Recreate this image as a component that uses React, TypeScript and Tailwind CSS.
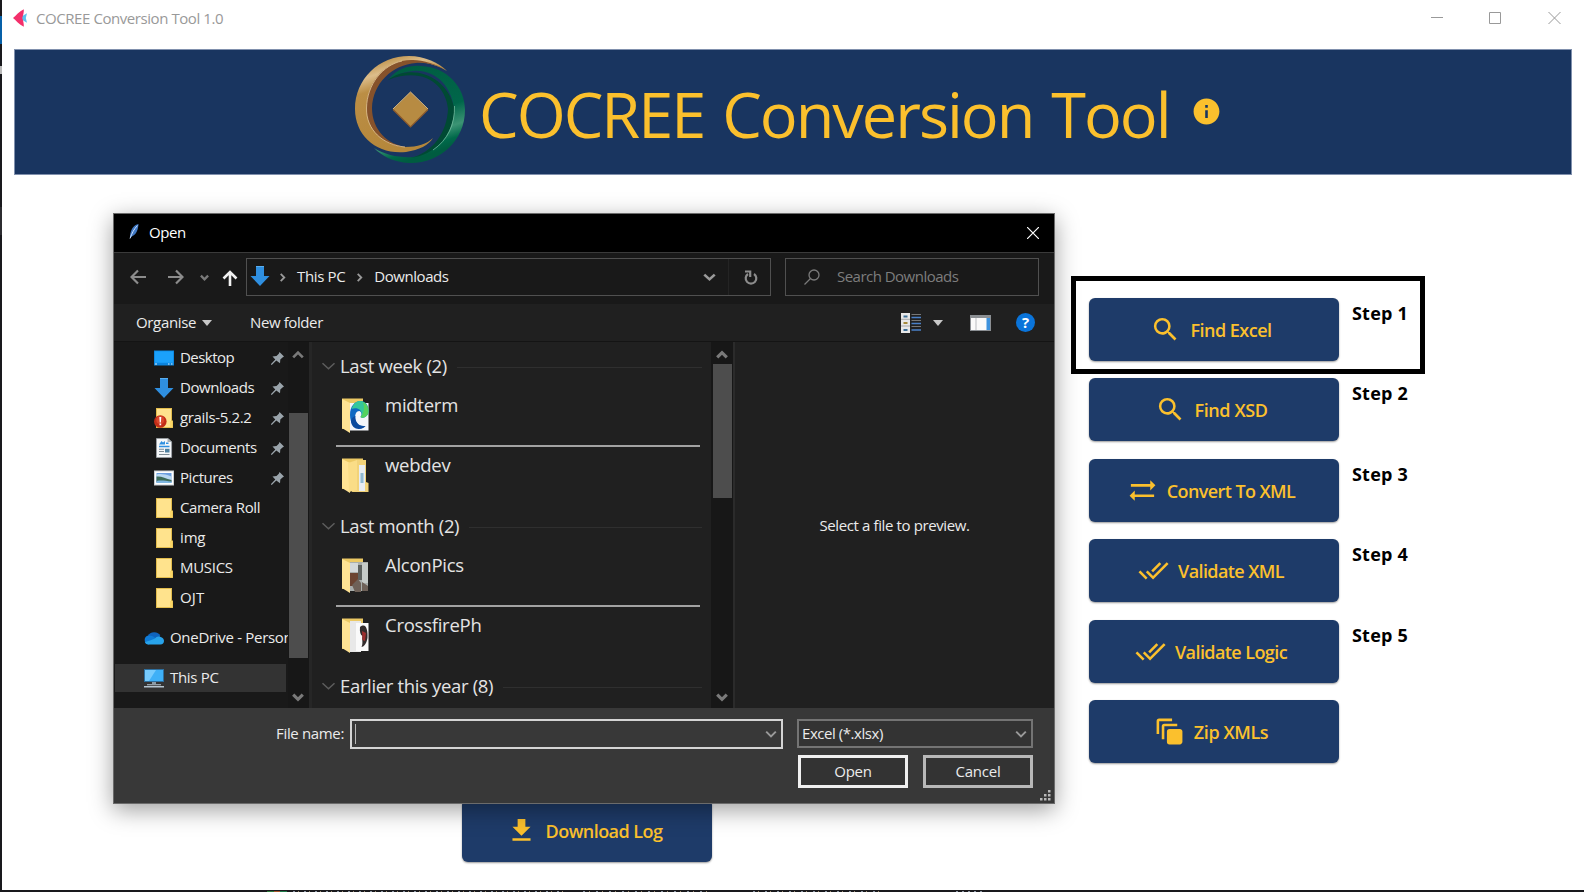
import React from "react";
import {
  MdSearch,
  MdSyncAlt,
  MdDoneAll,
  MdAutoAwesomeMotion,
  MdFileDownload,
  MdInfo,
} from "react-icons/md";

type IconType = React.ComponentType<{ className?: string }>;

function AppMark() {
  return (
    <svg className="h-[18px] w-[15px]" viewBox="0 0 15 18">
      <path d="M6 9 14 4.200 12.800 9 14 13.800z" fill="#5cc2ee" />
      <path d="M0 9C3 6.500 6 2.500 10.800 0.200C11 3 10.200 6.500 9.200 9C10.200 11.500 11 15 10.800 17.800C6 15.500 3 11.500 0 9z" fill="#f3306b" />
    </svg>
  );
}

function Emblem() {
  return (
    <svg className="h-[108px] w-[111px] shrink-0" viewBox="0 0 111 108">
      <defs>
        <linearGradient id="gold" x1="0" y1="0" x2="0.3" y2="1">
          <stop offset="0" stopColor="#b98a43" />
          <stop offset="0.12" stopColor="#c0954f" />
          <stop offset="0.24" stopColor="#dcbd8b" />
          <stop offset="0.38" stopColor="#bb8e45" />
          <stop offset="1" stopColor="#b5873b" />
        </linearGradient>
        <linearGradient id="green" x1="0" y1="0" x2="0.3" y2="1">
          <stop offset="0" stopColor="#005c40" />
          <stop offset="0.6" stopColor="#00664a" />
          <stop offset="0.8" stopColor="#3c9474" />
          <stop offset="0.92" stopColor="#00694a" />
          <stop offset="1" stopColor="#005c40" />
        </linearGradient>
      </defs>
      <path d="M33 24C43 11 57 9 66 10C92 11 110 31 110 54C110 85 84 108 54 107C38 106 27 100 19 92C30 99 45 102 58 101C80 98 97 80 99 54C97 30 80 13 58 15C47 16 38 20 33 24z" fill="url(#green)" />
      <path d="M33 24C52 8 92 16 99.500 53C98 80 80 99 55 102C78 97 92 76 93 53C91 30 70 10 33 24z" fill="#004a33" />
      <path d="M99.500 50C100 68 93 84 78 94" fill="none" stroke="#7fc4a8" strokeWidth="0.700" />
      <path d="M92 15C84 7 70 0 54 0C24 0 0 23 0 53C0 80 22 99 51 96C64 94 74 89 78 82C72 88 62 91 51 91C29 90 16 74 16 53C17 27 37 6 61 6C73 6 84 10 92 15z" fill="url(#gold)" />
      <path d="M92 15C82 8 68 4 58 4C32 3 12 24 11.500 52C11 74 30 92 54 91C32 90 17 73 17 52C18 27 37 9 61 7C73 6 84 10 92 15z" fill="#86522b" />
      <path d="M50 91C28 89 11 74 11.500 52C12 28 28 9 47 5" fill="none" stroke="#e2c595" strokeWidth="0.800" />
      <path d="M55.500 36 73 53.500 55.500 71 38 53.500z" fill="#b78b42" />
      <path d="M38 53.500 55.500 71 73 53.500" fill="none" stroke="#8b5a2d" strokeWidth="1.200" />
      <path d="M38 53 55.500 36 73 53" fill="none" stroke="#dcba80" strokeWidth="1" />
    </svg>
  );
}

function Chevron({ className, w = 2 }: { className: string; w?: number }) {
  return (
    <svg className={className} viewBox="0 0 10 10" preserveAspectRatio="none" fill="none" stroke="currentColor" strokeWidth={w}>
      <path d="M1 3l4 4 4-4" />
    </svg>
  );
}

function BlueArrow() {
  return (
    <svg className="h-5 w-5 shrink-0" viewBox="0 0 20 20">
      <path d="M6 0h8v10h5.500L10 20 0.500 10H6z" fill="#2f8fe0" />
      <path d="M6 0h8v1H6z" fill="#59aef0" />
    </svg>
  );
}

function FolderSmall({ alert }: { alert?: boolean }) {
  return (
    <svg className="h-5 w-5 shrink-0" viewBox="0 0 20 20">
      <path d="M2 0h16v12l1 1v7H2z" fill="#e3bd4d" />
      <path d="M3 1h14v18H3z" fill="#ffe38d" />
      <path d="M16 13h2.500v6.300H16z" fill="#fbd768" />
      {alert && (
        <>
          <circle cx="6.300" cy="13.500" r="6.300" fill="#c22c17" />
          <circle cx="6.300" cy="12" r="4" fill="#d9462c" />
          <path d="M5.300 9h2l-.4 5.500H5.700zM5.500 15.500h1.700v1.700H5.500z" fill="#fff" />
        </>
      )}
    </svg>
  );
}

function DesktopIcon() {
  return (
    <svg className="h-5 w-5 shrink-0" viewBox="0 0 20 20">
      <path d="M0 2.500h20v15H0z" fill="#0b84dd" />
      <path d="M0.800 3.300h18.400v11.500H0.800z" fill="#1ba1fb" />
      <path d="M1 15.500h2v1H1zM14 15.500h1.500v1H14zM17 15.500h1.500v1H17z" fill="#d8efff" />
    </svg>
  );
}

function DocumentIcon() {
  return (
    <svg className="h-5 w-5 shrink-0" viewBox="0 0 20 20">
      <path d="M2.500 0.400H14L17.600 4v15.600H2.500z" fill="#f4f6f8" stroke="#9da3a8" strokeWidth="0.800" />
      <path d="M13.500 0v4H18z" fill="#a9b0b5" />
      <path d="M5 6.500 7.500 3l1.500 1.500L11 3v3.500zM5 7.800h10.500v1.400H5zM12 4.500h2.500V6H12z" fill="#2f8fe0" />
      <path d="M5 10.800h5v1H5zM5 13h5v1H5zM5 16h10.500v1H5z" fill="#7c8a94" />
      <path d="M11 10.800h4.500v3.700H11z" fill="#4c7f9f" />
    </svg>
  );
}

function PictureIcon() {
  return (
    <svg className="h-5 w-5 shrink-0" viewBox="0 0 20 20">
      <path d="M0 2.500h20v15H0z" fill="#c9ced2" />
      <path d="M1 3.500h18v13H1z" fill="#fff" />
      <path d="M2.500 5h15v10h-15z" fill="#6c9fe0" />
      <path d="M2.500 6.500c4-1 8-.5 15 2V12h-15z" fill="#b9d8f2" />
      <path d="M2.500 8.500c5-.5 9 2 15 3.500V14h-15z" fill="#3d6b58" />
      <path d="M2.500 13c5-1 9 0 15 .5V15h-15z" fill="#7fb6e0" />
    </svg>
  );
}

function CloudIcon() {
  return (
    <svg className="h-5 w-5 shrink-0" viewBox="0 0 20 20">
      <path d="M4 8a6.500 5.500 0 0 1 12.300 0l-4.300 5H3z" fill="#0f63bd" />
      <path d="M4.500 16.500A4.500 4.500 0 0 1 4.500 7.600C8 7.500 10 9 14 12z" fill="#0f7bd6" />
      <path d="M4.500 16.500c-1.500 0-3-1-3.500-2.300 3-1.200 7-2.200 10-3.700 1-1.500 3-2.500 5-1.800 3 .5 4 2.500 4 4.300a3.700 3.700 0 0 1-3.500 3.500z" fill="#28a3ea" />
    </svg>
  );
}

function ComputerIcon() {
  return (
    <svg className="h-5 w-5 shrink-0" viewBox="0 0 20 20">
      <path d="M0 1h20v13H0z" fill="#2d6f9f" />
      <path d="M1 2h18v11H1z" fill="#3fb0f7" />
      <path d="M1 2h11L5 13H1z" fill="#77cbfd" />
      <path d="M8 14h4v2H8z" fill="#8a9aa5" />
      <path d="M3 16.300h14v1H3zM0 18h20v1.500H0z" fill="#b5c4cf" />
    </svg>
  );
}

function Pin() {
  return (
    <svg className="h-[13px] w-[13px] shrink-0" viewBox="0 0 13 13">
      <path d="M8.500 0 13 4.500 11.500 5.500 9.300 7.500 9 11.300 5.300 8.500 1 12.800H0V12L4.300 7.600 1.500 4.500 5.500 4 7.800 1.700z" fill="#9aa4ab" />
    </svg>
  );
}

type FolderKind = "edge" | "files" | "photo" | "game";

function BigFolder({ kind }: { kind: FolderKind }) {
  return (
    <svg className="h-[35px] w-[27px] shrink-0" viewBox="0 0 27 35">
      <path d="M0 0.500h21V31H0z" fill="#ecc964" />
      {kind === "edge" && (
        <>
          <path d="M7 5h19.500v27.500H7z" fill="#f4f6fa" />
          <path d="M8 17C8 8 13 3 18.500 3S27 8 26.500 14c-.5 4-5 7-8 5 2-2 1-5-1-6-4 0-5 5-4 9 1 4 5 7 10 6-6 6-15.500 1-15.500-11z" fill="#0d68c2" />
          <path d="M9.500 11C12 4.500 15 3 18.500 3c5 0 8.500 5 8 11-.5 4-5 7-8 5 2-2 1.500-5-.5-7-2-2-5.500-2.500-8.500-1z" fill="#35c79c" />
          <path d="M21 4c4 2 6 6 5.500 10-.5 4-5 7-8 5 3-3 4.500-9 2.500-15z" fill="#55d25f" />
          <path d="M13.500 18c-1 5 3 11 10 10-3 3.500-9 4-12 1-4-5-3-9 2-11z" fill="#0c4a9e" />
        </>
      )}
      {kind === "files" && (
        <>
          <path d="M14 2h10v22l2.500 1v9H10z" fill="#f2d379" />
          <path d="M17 7h6v26h-6z" fill="#e8edf2" />
          <path d="M18.500 15h3v10h-3z" fill="#8fb9d2" />
        </>
      )}
      {kind === "photo" && (
        <>
          <path d="M8 4h18v29H8z" fill="#a9aeac" />
          <path d="M8 15h8v13H8z" fill="#6b4432" />
          <path d="M16 7h4v15h-4z" fill="#5d615f" />
          <path d="M20 5h6v20h-6z" fill="#c5cac8" />
          <path d="M8 5h8v9H8z" fill="#d3d8da" />
          <path d="M10 27l6-6 3 4v9h-6zM20 24l6 4v5h-6z" fill="#6e6158" />
        </>
      )}
      {kind === "game" && (
        <>
          <path d="M8 3h11v31H8z" fill="#e8e8e8" />
          <path d="M14 5h12.500v28H14z" fill="#fafafa" />
          <path d="M18 9c6-5 8 3 7.500 11-1 6-4 9-6 9 2-4 0-8 1-11-2-1-3-4-2.500-9z" fill="#332c2c" />
          <path d="M20 13l4 2-1 8-2.500-1z" fill="#9c2f2f" />
        </>
      )}
      <path d="M0 1 8 5v30L0 30z" fill="#ffe394" />
      {kind === "files" && <path d="M6 5l9-3v30l-8 2z" fill="#fadd87" />}
    </svg>
  );
}

const places: { name: string; icon: React.ReactNode; pinned?: boolean; cls: string }[] = [
  { name: "Desktop", icon: <DesktopIcon />, pinned: true, cls: "tracking-[-0.55px]" },
  { name: "Downloads", icon: <BlueArrow />, pinned: true, cls: "tracking-[-0.45px]" },
  { name: "grails-5.2.2", icon: <FolderSmall alert />, pinned: true, cls: "tracking-[-0.35px]" },
  { name: "Documents", icon: <DocumentIcon />, pinned: true, cls: "tracking-[-0.4px]" },
  { name: "Pictures", icon: <PictureIcon />, pinned: true, cls: "tracking-[-0.45px]" },
  { name: "Camera Roll", icon: <FolderSmall />, cls: "tracking-[-0.38px]" },
  { name: "img", icon: <FolderSmall />, cls: "tracking-[-0.15px]" },
  { name: "MUSICS", icon: <FolderSmall />, cls: "tracking-[-0.3px]" },
  { name: "OJT", icon: <FolderSmall />, cls: "tracking-[0.1px]" },
];

function GroupHeader({ label }: { label: string }) {
  return (
    <div className="flex h-6 items-center pr-[9px] pl-[9px]">
      <Chevron className="mr-1 h-[14px] w-[15px] text-[#5c5c5c]" w={1} />
      <span className="text-[18.500px] leading-6 tracking-[-0.34px] text-[#e4e4e4]">{label}</span>
      <span className="mt-[2px] ml-[10px] h-px flex-1 bg-[#2f2f2f]" />
    </div>
  );
}

function FileRow({ name, kind, line }: { name: string; kind: FolderKind; line?: boolean }) {
  return (
    <div className="mr-[11px] ml-6 flex h-[60px] flex-col">
      <div className="flex h-[59px] shrink-0 items-start">
        <div className="mt-[12px] ml-[6px]">
          <BigFolder kind={kind} />
        </div>
        <span className="mt-[7px] ml-4 text-[18.500px] leading-6 tracking-[-0.25px] text-[#e4e4e4]">{name}</span>
      </div>
      {line && <span className="h-[2px] shrink-0 bg-[#a2a2a2]" />}
    </div>
  );
}

function Dialog() {
  return (
    <div className="absolute top-[213px] left-[113px] flex h-[591px] w-[942px] flex-col border border-[#6b6b6b] bg-[#191919] text-[15px] text-[#ebebeb] shadow-[0_6px_22px_rgba(0,0,0,0.38)]">
      <div className="flex h-[38px] shrink-0 items-center bg-black pr-[15px] pl-[15px]">
        <svg className="mb-[4px] h-[15px] w-[10px]" viewBox="0 0 10 15">
          <path d="M9.500 0C5 1 1 5 1 14l2.500-2C7.500 10 9 6 9.500 0z" fill="#3f78c4" />
          <path d="M1 14.500C3 9 5 5 8.500 1.500" stroke="#cfe2ff" strokeWidth="1" fill="none" />
        </svg>
        <span className="mb-[2px] ml-[10px] flex-1 tracking-[-0.4px] text-white">Open</span>
        <svg className="h-3 w-3" viewBox="0 0 12 12" stroke="#fff" strokeWidth="1.200">
          <path d="M0 0l12 12M12 0L0 12" />
        </svg>
      </div>

      <div className="flex h-[52px] shrink-0 items-center border-t border-[#3a3a3a] pr-[15px] pb-[3px] pl-4">
        <svg className="h-4 w-4" viewBox="0 0 16 16" fill="none" stroke="#8c8c8c" strokeWidth="2.200">
          <path d="M16 8H1.500M8 1.500 1.500 8 8 14.500" />
        </svg>
        <svg className="ml-[22px] h-4 w-4" viewBox="0 0 16 16" fill="none" stroke="#8c8c8c" strokeWidth="2.200">
          <path d="M0 8h14.500M8 1.500 14.500 8 8 14.500" />
        </svg>
        <Chevron className="ml-[16px] h-[9px] w-[9px] text-[#7a7a7a]" w={2.6} />
        <svg className="mt-[2px] ml-[13px] h-4 w-4" viewBox="0 0 16 16" fill="none" stroke="#f2f2f2" strokeWidth="2.600">
          <path d="M8 16V2M1.500 8.500 8 2l6.500 6.500" />
        </svg>
        <div className="ml-[8px] flex h-[38px] w-[525px] items-center border border-[#505050] pl-[3px]">
          <span className="mb-[3px] flex"><BlueArrow /></span>
          <Chevron className="ml-[8px] h-[9px] w-[9px] -rotate-90 text-[#9a9a9a]" w={2} />
          <span className="mb-[2px] ml-[10px] tracking-[-0.35px]">This PC</span>
          <Chevron className="ml-[10px] h-[9px] w-[9px] -rotate-90 text-[#9a9a9a]" w={2} />
          <span className="mb-[2px] ml-[10px] flex-1 tracking-[-0.45px]">Downloads</span>
          <Chevron className="h-[12px] w-[13px] text-[#9a9a9a]" w={2} />
          <span className="ml-[12px] h-full w-px bg-[#242424]" />
          <svg className="mr-[12px] ml-[15px] h-[15px] w-[14px]" viewBox="0 0 14 15" fill="none" stroke="#8c8c8c" strokeWidth="2.200">
            <path d="M4 4A5.300 5.300 0 1 0 10 4M1 1.500h5.200V7" />
          </svg>
        </div>
        <div className="ml-[14px] flex h-[38px] flex-1 items-center border border-[#505050] pl-[18px]">
          <svg className="h-4 w-4" viewBox="0 0 16 16" fill="none" stroke="#7a7a7a" strokeWidth="1.300">
            <circle cx="10" cy="6" r="5" />
            <path d="M6.500 9.500.5 15.500" />
          </svg>
          <span className="mb-[2px] ml-[17px] tracking-[-0.52px] text-[#7d7d7d]">Search Downloads</span>
        </div>
      </div>

      <div className="flex h-[38px] shrink-0 items-center border-b border-[#141414] bg-[#202020] pr-[19px] pl-[22px]">
        <span className="tracking-[-0.35px]">Organise</span>
        <span className="ml-[6px] h-0 w-0 border-x-[5px] border-t-[6px] border-x-transparent border-t-[#c8c8c8]" />
        <span className="ml-[38px] flex-1 tracking-[-0.4px]">New folder</span>
        <svg className="h-5 w-5" viewBox="0 0 20 20">
          <path d="M0 0h9v20H0z" fill="#e8e8e8" />
          <path d="M0 6.300h9M0 13h9" stroke="#8d8d8d" strokeWidth="0.700" />
          <path d="M2.500 2.500h4v2h-4zM2.500 16h4v2h-4z" fill="#3c6f96" />
          <path d="M2.500 9h4v2h-4z" fill="#a58a3c" />
          <path d="M10.500 1.500H20M10.500 7.500H20M10.500 13.500H20" stroke="#777" strokeWidth="1" />
          <path d="M10.500 4.500H20M10.500 10.500H20M10.500 17H20" stroke="#4a80c8" strokeWidth="1.400" />
        </svg>
        <span className="ml-[12px] h-0 w-0 border-x-[5px] border-t-[6px] border-x-transparent border-t-[#c8c8c8]" />
        <svg className="ml-[27px] h-4 w-[21px]" viewBox="0 0 21 16">
          <path d="M0 0h21v16H0z" fill="#8b8f93" />
          <path d="M1 3h19v12H1z" fill="#fafafa" />
          <path d="M5.500 3h1v12h-1z" fill="#b9bcc0" />
          <path d="M16.500 3H20v12h-3.500z" fill="#3d92dd" />
        </svg>
        <span className="ml-[25px] flex h-[19px] w-[19px] items-center justify-center rounded-full bg-[#0a74da] text-[15px] leading-none font-bold text-white">?</span>
      </div>

      <div className="flex min-h-0 flex-1">
        <div className="flex w-[174px] shrink-0 flex-col overflow-hidden pt-px">
          {places.map((p) => (
            <div key={p.name} className="flex h-[30px] shrink-0 items-center pr-[1px] pl-10">
              {p.icon}
              <span className={"mb-px ml-[6px] flex-1 whitespace-nowrap " + p.cls}>{p.name}</span>
              {p.pinned && <span className="mr-[3px]"><Pin /></span>}
            </div>
          ))}
          <div className="mt-[10px] flex h-[30px] shrink-0 items-center pl-[30px]">
            <CloudIcon />
            <span className="mb-px ml-[6px] whitespace-nowrap tracking-[-0.3px]">OneDrive - Personal</span>
          </div>
          <div className="mt-[11px] mr-[2px] ml-px flex h-7 shrink-0 items-center bg-[#333333] pl-[29px]">
            <ComputerIcon />
            <span className="mb-px ml-[6px] tracking-[-0.3px]">This PC</span>
          </div>
        </div>
        <div className="flex w-[21px] shrink-0 flex-col items-center justify-between bg-[#171717] py-[5px]">
          <Chevron className="mt-[2px] mr-px h-[12px] w-[12px] rotate-180 text-[#7a7a7a]" w={2.2} />
          <div className="mt-[52px] mb-[33px] w-[19px] flex-1 bg-[#4d4d4d]" />
          <Chevron className="mr-px h-[12px] w-[12px] text-[#7a7a7a]" w={2.6} />
        </div>
        <div className="w-[3px] shrink-0 bg-[#262626]" />
        <div className="flex w-[399px] shrink-0 flex-col overflow-hidden bg-[#202020] pt-[12px]">
          <GroupHeader label="Last week (2)" />
          <div className="mt-[8px]">
            <FileRow name="midterm" kind="edge" line />
            <FileRow name="webdev" kind="files" />
          </div>
          <div className="mt-[8px]">
            <GroupHeader label="Last month (2)" />
          </div>
          <div className="mt-[8px]">
            <FileRow name="AlconPics" kind="photo" line />
            <FileRow name="CrossfirePh" kind="game" />
          </div>
          <div className="mt-[8px]">
            <GroupHeader label="Earlier this year (8)" />
          </div>
        </div>
        <div className="flex w-[22px] shrink-0 flex-col items-center bg-[#171717] pt-[5px] pb-[5px]">
          <Chevron className="mt-[2px] h-[12px] w-[12px] rotate-180 text-[#7a7a7a]" w={2.6} />
          <div className="mt-[3px] h-[134px] w-[19px] bg-[#4d4d4d]" />
          <Chevron className="mt-auto h-[12px] w-[12px] text-[#7a7a7a]" w={2.6} />
        </div>
        <div className="w-[2px] shrink-0 bg-[#2b2b2b]" />
        <div className="flex flex-1 items-center justify-center bg-[#202020]">
          <span className="tracking-[-0.38px]">Select a file to preview.</span>
        </div>
      </div>

      <div className="flex h-[95px] shrink-0 flex-col bg-[#383838] pt-[11px] pr-[21px]">
        <div className="flex h-[31px] items-start">
          <span className="w-[230px] pt-[3px] text-right tracking-[-0.35px]">File name:</span>
          <div className="ml-[6px] flex h-[30px] w-[433px] items-center border-2 border-[#d4d4d4] pr-[4px] pl-[3px]">
            <span className="h-5 w-px flex-1 border-l border-[#b8b8b8]" />
            <Chevron className="h-[12px] w-[12px] text-[#9a9a9a]" w={1.6} />
          </div>
          <div className="ml-[14px] flex h-[29px] flex-1 items-center border-2 border-[#747474] bg-[#333333] pr-[4px] pl-[3px]">
            <span className="flex-1 text-[15px] tracking-[-0.45px]">Excel (*.xlsx)</span>
            <Chevron className="h-[12px] w-[12px] text-[#9a9a9a]" w={1.6} />
          </div>
        </div>
        <div className="mt-[5px] flex justify-end gap-[15px]">
          <button className="h-[33px] w-[110px] border-[3px] border-[#f0f0f0] bg-[#333333] pb-px leading-none tracking-[-0.3px]">Open</button>
          <button className="h-[33px] w-[110px] border-[3px] border-[#b8b8b8] bg-[#333333] pb-px leading-none tracking-[-0.2px]">Cancel</button>
        </div>
      </div>
      <svg className="absolute right-[3px] bottom-[2px] h-[11px] w-[11px]" viewBox="0 0 11 11" fill="#b8b8b8">
        <path d="M8 0h2.500v2.500H8zM4 4h2.500v2.500H4zM8 4h2.500v2.500H8zM0 8h2.500v2.500H0zM4 8h2.500v2.500H4zM8 8h2.500v2.500H8z" />
      </svg>
    </div>
  );
}

function ActionButton({ icon: Icon, label, cls = "" }: { icon: IconType; label: string; cls?: string }) {
  return (
    <button className="flex h-[63px] w-[250px] shrink-0 items-center justify-center rounded-[6px] bg-[#1e3b69] pr-[6px] text-[#fbc02d] shadow-[0_1px_2px_rgba(0,0,0,0.4)]">
      <Icon className="h-[31px] w-[31px]" />
      <span className={"ml-[9px] pt-[2px] text-[18px] font-semibold " + cls}>{label}</span>
    </button>
  );
}

const steps: { icon: IconType; label: string; step?: string; cls: string }[] = [
  { icon: MdSearch, label: "Find Excel", step: "Step 1", cls: "tracking-[-0.5px]" },
  { icon: MdSearch, label: "Find XSD", step: "Step 2", cls: "tracking-[-0.42px]" },
  { icon: MdSyncAlt, label: "Convert To XML", step: "Step 3", cls: "tracking-[-0.58px]" },
  { icon: MdDoneAll, label: "Validate XML", step: "Step 4", cls: "tracking-[-0.6px]" },
  { icon: MdDoneAll, label: "Validate Logic", step: "Step 5", cls: "tracking-[-0.58px]" },
  { icon: MdAutoAwesomeMotion, label: "Zip XMLs", cls: "tracking-[-0.4px]" },
];

function DesktopEdge() {
  return (
    <div className="flex h-[2px] shrink-0 items-end pl-[267px]">
      <span className="h-px w-[7px] bg-[#2c7a3a]" />
      <span className="h-px w-[6px] bg-[#a8552a]" />
      <span className="mr-[6px] h-px w-[7px] bg-[#1c7a46]" />
      <span className="mr-5 h-px w-[270px] bg-[repeating-linear-gradient(90deg,#8c96a3_0_2px,#19191d_2px_5px,#9c8c72_5px_6px,#19191d_6px_11px)]" />
      <span className="mr-[45px] h-px w-[125px] bg-[repeating-linear-gradient(90deg,#8c96a3_0_2px,#19191d_2px_6px,#9c8c72_6px_7px,#19191d_7px_13px)]" />
      <span className="mr-[75px] h-px w-[128px] bg-[repeating-linear-gradient(90deg,#8c96a3_0_2px,#19191d_2px_5px,#9c8c72_5px_6px,#19191d_6px_12px)]" />
      <span className="h-px w-[28px] bg-[repeating-linear-gradient(90deg,#8c96a3_0_2px,#19191d_2px_6px)]" />
    </div>
  );
}

export default function App() {
  return (
    <div className="relative flex h-[892px] w-[1584px] flex-col overflow-hidden bg-[#19191d] font-['Open_Sans','Noto_Sans',sans-serif]">
      <div className="flex h-[890px] shrink-0">
        <div className="flex w-[2px] shrink-0 flex-col">
          <span className="h-4" />
          <span className="h-7 bg-[#0660a8]" />
          <span className="mt-[22px] h-2 bg-[#b9b9b9]" />
          <span className="mt-[133px] h-7 bg-[#2c2c30]" />
        </div>
        <div className="flex flex-1 flex-col bg-white">
          <div className="flex h-[49px] shrink-0 items-start pl-[11px]">
            <div className="pt-[9px]"><AppMark /></div>
            <span className="mt-[8px] ml-[8px] flex-1 text-[15px] leading-[21px] tracking-[-0.43px] text-[#999]">COCREE Conversion Tool 1.0</span>
            <svg className="mt-[11px] mr-[21px] h-[14px] w-[134px]" viewBox="0 0 134 14" fill="none" stroke="#999" strokeWidth="1">
              <path d="M2 6.500h12M60.500 1.500h11v11h-11zM119.500 1l12 12M131.500 1l-12 12" />
            </svg>
          </div>
          <div className="mr-3 ml-3 flex h-[126px] shrink-0 items-start border border-[#8090ad] bg-[#193560] pl-[340px] text-[#fbc02d]">
            <div className="mt-[6px]"><Emblem /></div>
            <h1 className="mt-4 ml-[13px] w-[696px] text-[63px] leading-[96px] whitespace-nowrap tracking-[-2px] [word-spacing:3.500px]">COCREE Conversion Tool</h1>
            <MdInfo className="mt-[46px] ml-[16px] h-[31px] w-[31px]" />
          </div>
          <div className="flex flex-1 items-start">
            <div className="flex w-[1087px] shrink-0 flex-col pt-[624px] pl-[460px]">
              <ActionButton icon={MdFileDownload} label="Download Log" cls="tracking-[-0.55px]" />
            </div>
            <div className="flex flex-col gap-[17.400px] pt-[123px]">
              {steps.map((s) => (
                <div key={s.label} className="flex items-start">
                  <ActionButton icon={s.icon} label={s.label} cls={s.cls} />
                  {s.step && <span className="ml-[13px] pt-[3px] text-[18px] leading-6 font-bold tracking-[0.2px] text-black">{s.step}</span>}
                </div>
              ))}
            </div>
          </div>
        </div>
      </div>
      <DesktopEdge />
      <div className="absolute top-[276px] left-[1071px] h-[98px] w-[354px] border-[5px] border-black" />
      <Dialog />
    </div>
  );
}
